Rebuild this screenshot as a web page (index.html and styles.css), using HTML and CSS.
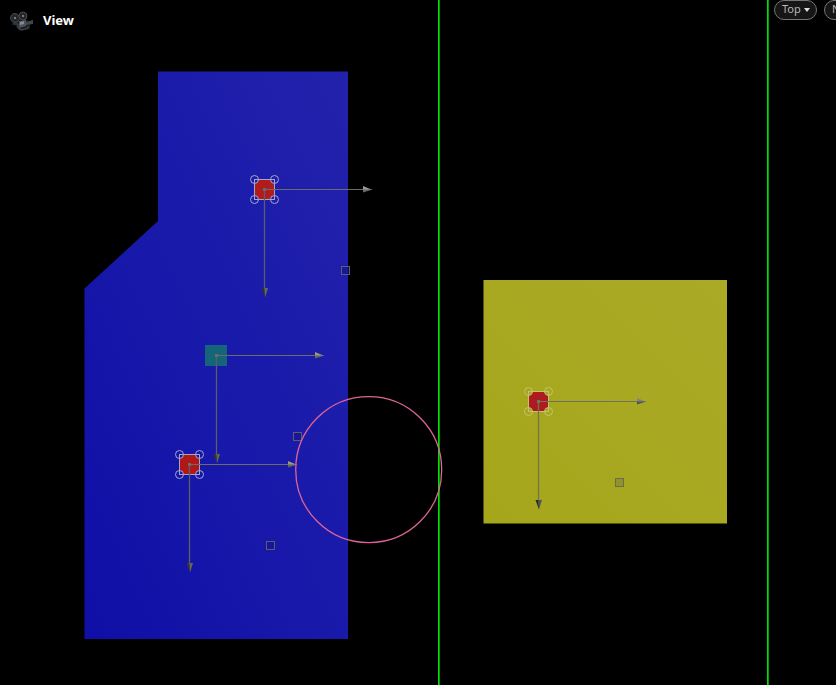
FILE: index.html
```
<!DOCTYPE html>
<html lang="en">
<head>
<meta charset="utf-8">
<title>View</title>
<link rel="stylesheet" href="styles.css">
</head>
<body>
<main class="viewport">
  <svg class="scene" aria-hidden="true">
    <defs>
      <linearGradient id="blue" x1="1" y1="0" x2="0" y2="1">
        <stop offset="0" stop-color="#2222ac"/>
        <stop offset=".5" stop-color="#1919aa"/>
        <stop offset="1" stop-color="#0f0fa7"/>
      </linearGradient>
      <linearGradient id="yellow" x1="1" y1="0" x2="0" y2="1">
        <stop offset="0" stop-color="#aaaa27"/>
        <stop offset="1" stop-color="#a6a61b"/>
      </linearGradient>
      <g id="axes">
        <path class="axis" d="M0 0H100"/>
        <path class="axis axis-down" d="M0 0V100"/>
        <path class="head-light" d="M98.500-3.500V.5H108Z"/>
        <path class="head-mid" d="M98.500 0V3L108 0Z"/>
        <path class="head-dark" d="M-3 98.500H0L.5 108Z"/>
        <path class="head-mid" d="M0 98.500H3.500L.5 108Z"/>
        <rect class="pivot" x="-1.500" y="-1.500" width="3" height="3"/>
      </g>
      <g id="frame">
        <rect x="-10" y="-10" width="20" height="20"/>
        <circle cx="-10" cy="-10" r="4"/>
        <circle cx="10" cy="-10" r="4"/>
        <circle cx="-10" cy="10" r="4"/>
        <circle cx="10" cy="10" r="4"/>
      </g>
      <path id="knob" d="M-5-10H5L10-5V5L5 10H-5L-10 5V-5Z"/>
      <rect id="handle" x="77" y="77" width="8" height="8"/>
    </defs>

    <path fill="url(#blue)" d="M158 71.500H348V639H84.500V288.500L158 221Z"/>
    <rect fill="url(#yellow)" x="483.500" y="280" width="243.500" height="243.500"/>
    <g class="guides">
      <rect x="438" width="1" height="100%"/><rect class="guide-shade" x="439" width="1" height="100%"/>
      <rect x="767" width="1" height="100%"/><rect class="guide-shade" x="768" width="1" height="100%"/>
    </g>

    <g transform="translate(264.500 189.500)">
      <use href="#knob" fill="#b01c1c"/><use href="#frame" class="frame"/>
      <use href="#axes"/><use href="#handle" class="handle"/>
    </g>
    <g transform="translate(216.500 355.500)">
      <rect class="teal" x="-11.500" y="-10.500" width="22" height="21"/>
      <use href="#axes" class="olive"/><use href="#handle" class="handle"/>
    </g>
    <g transform="translate(189.500 464.500)">
      <use href="#knob" fill="#b01818"/><use href="#frame" class="frame"/>
      <use href="#axes" class="olive"/><use href="#handle" class="handle"/>
    </g>
    <g transform="translate(538.500 401.500)">
      <use href="#knob" fill="#ad1b20"/><use href="#frame" class="frame pale"/>
      <use href="#axes" class="slate"/><use href="#handle" class="handle handle-filled"/>
    </g>
    <circle class="brush" cx="368.700" cy="469.700" r="73"/>
  </svg>

  <header class="bar">
    <svg class="camera" viewBox="0 0 24 22" aria-hidden="true">
      <path fill="#1d2023" d="M3 12L7 11 17 10 20 13V19L10 21 7 18Z"/>
      <circle cx="5" cy="8" r="4.500" fill="#25292c" stroke="#43494e"/>
      <circle cx="13" cy="6" r="4" fill="#23272a" stroke="#43494e"/>
      <path fill="#747b80" d="M4 7H6V9H4ZM12 5H14V7H12Z"/>
      <path fill="#4d5358" d="M9 11L16 10V16L9 18Z"/>
      <path fill="#858b90" d="M10 12L14 11V14L10 15Z"/>
      <path fill="#40464a" d="M16 12L23 10V14L16 15Z"/>
      <path stroke="#454b50" fill="none" d="M2 14L8 14V18L12 20 18 18V16"/>
    </svg>
    <h1 class="title">View</h1>
    <nav class="menus" aria-label="Camera">
      <button class="pill" type="button">Top<svg class="caret" viewBox="0 0 6 4" aria-hidden="true"><path d="M0 0H6L3 4Z"/></svg></button>
      <button class="pill" type="button">N</button>
    </nav>
  </header>
</main>
</body>
</html>
```
FILE: styles.css
```
body {
  margin: 0;
  background: #000;
  font-family: "Noto Sans", "Open Sans", sans-serif;
}

.viewport {
  position: relative;
  min-height: 100vh;
  overflow: hidden;
}

.scene {
  position: absolute;
  inset: 0;
  width: 100%;
  height: 100%;
}

.bar {
  position: relative;
  display: flex;
  align-items: flex-start;
  padding-left: 10px;
}

.camera {
  width: 24px;
  height: 22px;
  margin-top: 10px;
}

.title {
  margin: 10px 0 0 9px;
  color: #fff;
  font-size: 13px;
  line-height: 20px;
  font-weight: 700;
}

.menus {
  display: flex;
  gap: 7px;
  width: 62px;
  margin-left: auto;
  overflow: hidden;
}

.pill {
  flex: none;
  display: flex;
  align-items: center;
  box-sizing: border-box;
  height: 20px;
  min-width: 43px;
  padding: 0 6px 3px 7px;
  border: 1px solid #777;
  border-radius: 10px;
  background: #161616;
  color: #b8b8b8;
  font: 11px/16px "Noto Sans", "Open Sans", sans-serif;
}

.caret {
  width: 6px;
  height: 4px;
  margin: 2px 0 0 3px;
  fill: #ddd;
}

.guides { fill: #00e100; }
.guide-shade { fill: #009c00; }

.axis {
  fill: none;
  stroke: var(--axis, #6b6b6b);
}

.axis-down { stroke: var(--axis-down, #5c5c6b); stroke-width: 1.3; }

.pivot { fill: var(--axis, #6b6b6b); }
.head-light { fill: var(--light, #999); }
.head-mid { fill: var(--mid, #686868); }
.head-dark { fill: var(--dark, #303030); }

.olive {
  --axis: #6d6d68;
  --light: #999988;
  --mid: #666653;
  --dark: #37372b;
}

.slate {
  --axis: #717160;
  --axis-down: #717155;
  --light: #83837d;
  --mid: #555558;
  --dark: #25253b;
}

.frame {
  fill: none;
  stroke: #a5a5c8;
}

.pale { stroke: #c3c36c; }

.handle {
  fill: #15158c;
  fill-opacity: .6;
  stroke: #5c5c70;
}

.handle-filled {
  fill: #85852a;
  stroke: #696954;
}

.teal { fill: #156578; }

.brush {
  fill: none;
  stroke: #dc6497;
  stroke-width: 1.3;
}
```
